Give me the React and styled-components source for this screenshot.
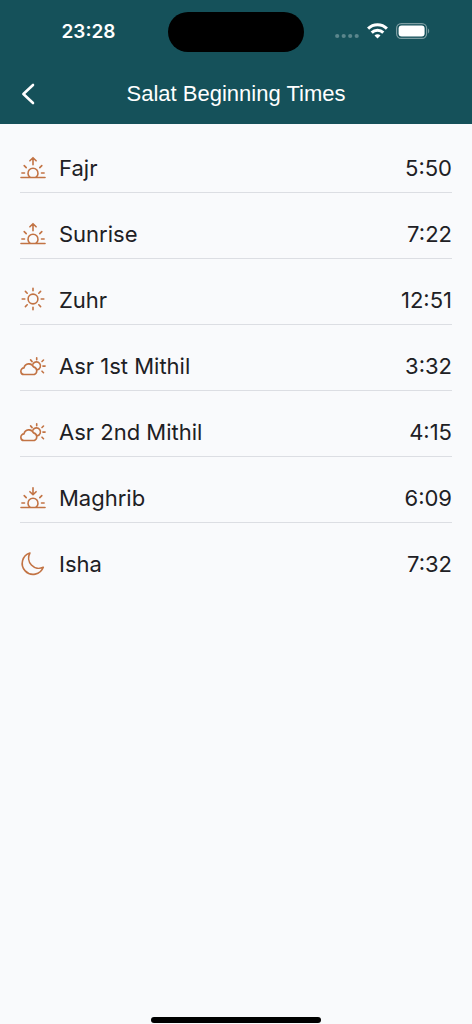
import React from 'react';
import styled, { createGlobalStyle } from 'styled-components';

const GlobalStyle = createGlobalStyle`
  * {
    box-sizing: border-box;
  }

  body {
    margin: 0;
    background: #f9fafc;
    font-family: Inter, "Liberation Sans", sans-serif;
  }
`;

const Screen = styled.div`
  display: flex;
  flex-direction: column;
  min-height: 100vh;
  background: #f9fafc;
  color: #202024;
`;

const Header = styled.header`
  background: #15515a;
  color: #ffffff;
`;

const StatusBar = styled.div`
  display: grid;
  grid-template-columns: 1fr 136px 1fr;
  align-items: center;
  padding-top: 12px;
`;

const Clock = styled.span`
  padding-left: 9px;
  font-size: 19px;
  font-weight: 600;
  line-height: 24px;
  text-align: center;
`;

const Island = styled.div`
  height: 40px;
  border-radius: 20px;
  background: #000000;
`;

const StatusIcons = styled.div`
  display: flex;
  align-items: center;
  justify-content: center;
  gap: 8px;
  padding-right: 12px;
  padding-bottom: 2px;
`;

const NavBar = styled.div`
  display: grid;
  grid-template-columns: 56px 1fr 56px;
  align-items: center;
  height: 72px;
  padding-top: 12px;
`;

const BackButton = styled.button`
  display: flex;
  align-items: center;
  justify-content: center;
  height: 44px;
  padding: 0;
  border: 0;
  background: none;
  color: inherit;
  cursor: pointer;
`;

const Title = styled.h1`
  margin: 0;
  font-family: "Liberation Sans", Arial, sans-serif;
  font-size: 22px;
  font-weight: 400;
  line-height: 28px;
  text-align: center;
`;

const TimeList = styled.ul`
  display: flex;
  flex: 1;
  flex-direction: column;
  gap: 17px;
  margin: 0;
  padding: 20px;
  list-style: none;
`;

const Row = styled.li`
  display: flex;
  align-items: center;
  height: 49px;
  border-bottom: 1px solid #dcdee3;

  &:last-child {
    border-bottom-color: transparent;
  }
`;

const Icon = styled.svg`
  flex: none;
  width: 26px;
  height: 26px;
  margin-right: 13px;
  fill: none;
  stroke: #c27344;
  stroke-width: 1.6;
  stroke-linecap: round;
  stroke-linejoin: round;
`;

const Name = styled.span`
  flex: 1;
  font-size: 22px;
  line-height: 28px;
`;

const Time = styled.time`
  font-size: 22px;
  line-height: 28px;
`;

const HomeIndicator = styled.div`
  width: 36%;
  height: 6px;
  margin: 0 auto 1px;
  border-radius: 3px;
  background: #000000;
`;

const Horizon = () => (
  <>
    <path d="M1 22.5h24" />
    <path d="M9.9 22.1a5 5 0 1 1 6.2 0" />
    <path d="M1.9 18h2.6M21.5 18h2.6M4.2 10.6l2 2M21.8 10.6l-2 2" />
  </>
);

const SunriseIcon = () => (
  <Icon viewBox="0 0 26 26" aria-hidden="true">
    <Horizon />
    <path d="M13 9.8V2.8M9.9 5.8L13 2.7l3.1 3.1" />
  </Icon>
);

const SunsetIcon = () => (
  <Icon viewBox="0 0 26 26" aria-hidden="true">
    <Horizon />
    <path d="M13 2.7v7M9.9 6.7L13 9.8l3.1-3.1" />
  </Icon>
);

const SunIcon = () => (
  <Icon viewBox="0 0 26 26" aria-hidden="true">
    <circle cx="13" cy="12" r="4.9" />
    <path d="M13 1.2v2.6M13 20.2v2.6M2.2 12h2.6M21.2 12h2.6M5.4 4.4l1.8 1.8M18.8 17.8l1.8 1.8M5.4 19.6l1.8-1.8M18.8 6.2l1.8-1.8" />
  </Icon>
);

const CloudSunIcon = () => (
  <Icon viewBox="0 0 26 26" aria-hidden="true">
    <path d="M4.3 21.5a3.3 3.3 0 0 1-.3-6.6 5 5 0 0 1 9.5-1 4 4 0 0 1 .8 7.6z" />
    <path d="M12.9 11.1a4 4 0 1 1 4.4 5.7" />
    <path d="M16.7 4.8v2M22.9 13.1h2.2M22 8.5l1.5-1.5M10.6 6.9l1.5 1.7M22 18.2l1.5 1.5" />
  </Icon>
);

const MoonIcon = () => (
  <Icon viewBox="0 0 26 26" aria-hidden="true">
    <path d="M9.9 2A10.9 10.9 0 1 0 23.3 16.3 10.3 10.3 0 0 1 9.9 2z" />
  </Icon>
);

const times = [
  { name: 'Fajr', time: '5:50', icon: SunriseIcon },
  { name: 'Sunrise', time: '7:22', icon: SunriseIcon },
  { name: 'Zuhr', time: '12:51', icon: SunIcon },
  { name: 'Asr 1st Mithil', time: '3:32', icon: CloudSunIcon },
  { name: 'Asr 2nd Mithil', time: '4:15', icon: CloudSunIcon },
  { name: 'Maghrib', time: '6:09', icon: SunsetIcon },
  { name: 'Isha', time: '7:32', icon: MoonIcon },
];

const SignalDots = () => (
  <svg width="24" height="16" viewBox="0 0 24 16" fill="#5b868c" aria-hidden="true">
    <circle cx="2.2" cy="13" r="2.1" />
    <circle cx="8.7" cy="13" r="2.1" />
    <circle cx="15.2" cy="13" r="2.1" />
    <circle cx="21.7" cy="13" r="2.1" />
  </svg>
);

const WifiIcon = () => (
  <svg width="21" height="16" viewBox="0 0 21 16" fill="none" stroke="#ffffff" strokeWidth="3" aria-hidden="true">
    <path d="M1.1 5.6a13.4 13.4 0 0 1 18.8 0" />
    <path d="M4.7 9.6a8.3 8.3 0 0 1 11.6 0" />
    <path d="M10.5 15.6l-3-3a4.2 4.2 0 0 1 6 0z" fill="#ffffff" stroke="none" />
  </svg>
);

const BatteryIcon = () => (
  <svg width="34" height="16" viewBox="0 0 34 16" aria-hidden="true">
    <rect x="0.6" y="0.6" width="30" height="14.8" rx="4.6" fill="none" stroke="#7c9da2" strokeWidth="1.2" />
    <rect x="2.6" y="2.6" width="26" height="10.8" rx="3" fill="#ffffff" />
    <path d="M32 5.5c1.6.7 1.6 4.3 0 5z" fill="#7c9da2" />
  </svg>
);

const App = () => (
  <>
    <GlobalStyle />
    <Screen>
      <Header>
        <StatusBar>
          <Clock>23:28</Clock>
          <Island />
          <StatusIcons>
            <SignalDots />
            <WifiIcon />
            <BatteryIcon />
          </StatusIcons>
        </StatusBar>
        <NavBar>
          <BackButton type="button" aria-label="Back">
            <svg width="14" height="22" viewBox="0 0 14 22" fill="none" stroke="currentColor" strokeWidth="2.6" strokeLinecap="round" strokeLinejoin="round">
              <path d="M12 2L2.4 11l9.6 9" />
            </svg>
          </BackButton>
          <Title>Salat Beginning Times</Title>
        </NavBar>
      </Header>

      <TimeList>
        {times.map(({ name, time, icon: RowIcon }) => (
          <Row key={name}>
            <RowIcon />
            <Name>{name}</Name>
            <Time>{time}</Time>
          </Row>
        ))}
      </TimeList>
      <HomeIndicator />
    </Screen>
  </>
);

export default App;
